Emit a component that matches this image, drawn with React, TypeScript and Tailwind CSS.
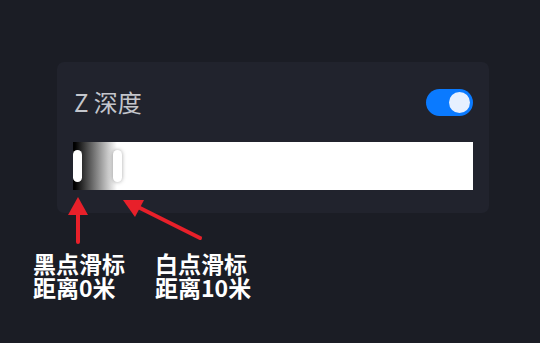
import React from "react";

export default function App() {
  const font = { fontFamily: '"Noto Sans CJK SC", "Noto Sans", sans-serif' };
  return (
    <div className="relative w-[540px] h-[343px] bg-[#1b1d25] pt-[62px] pl-[57px]" style={font}>
      <div className="w-[432px] h-[151px] rounded-[7px] bg-[#21232d] px-4 pt-[26px]">
        <div className="flex items-center justify-between h-[28px]">
          <span className="text-[24px] leading-none text-[#c4c6cc] pl-[1px]">Z 深度</span>
          <div className="w-[47px] h-[27px] rounded-full bg-[#0a7aff] flex items-center justify-end pr-[3px]">
            <div className="w-[21px] h-[21px] rounded-full bg-[#e6f0ff]" />
          </div>
        </div>
        <div className="mt-[26px] h-[48px] w-[400px] bg-[linear-gradient(to_right,#000_0px,#000_2px,#fff_44px)] relative flex items-center">
          <div className="absolute left-0 top-[8px] w-[9px] h-[32px] rounded-full bg-white" />
          <div className="absolute left-[40px] top-[8px] w-[9px] h-[32px] rounded-full bg-white shadow-[0_0_4px_rgba(0,0,0,0.35)]" />
        </div>
      </div>
      <div className="flex -ml-[24px] mt-[38px] gap-[30px] text-white text-[23px] leading-[24px] font-bold">
        <div>
          <div>黑点滑标</div>
          <div>距离0米</div>
        </div>
        <div>
          <div>白点滑标</div>
          <div>距离10米</div>
        </div>
      </div>
      <svg className="absolute left-0 top-0 pointer-events-none" width="540" height="343">
        <line x1="78" y1="242" x2="78" y2="212" stroke="#e8202a" strokeWidth="4" strokeLinecap="round" />
        <polygon points="78,197 68,215 88,215" fill="#e8202a" />
        <line x1="200" y1="238" x2="138" y2="207" stroke="#e8202a" strokeWidth="4" strokeLinecap="round" />
        <polygon points="123,200 144,200 135,217" fill="#e8202a" />
      </svg>
    </div>
  );
}
